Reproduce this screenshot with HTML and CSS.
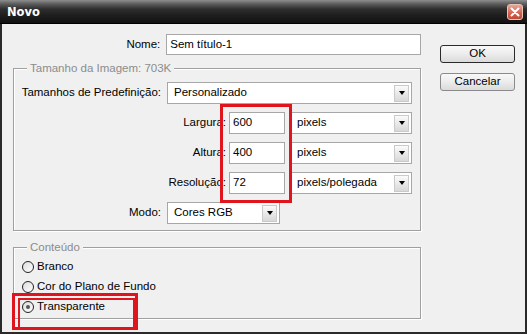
FILE: index.html
```html
<!DOCTYPE html>
<html lang="pt">
  <head>
    <meta charset="utf-8" />
    <title>Novo</title>
    <link rel="stylesheet" href="styles.css">
  </head>
  <body>
    <div class="window">
      <div class="titlebar">
        <span class="title">Novo</span>
        <span class="close">
          <svg width="10" height="10" viewBox="0 0 10 10">
            <path d="M1.5 1.5 L8.5 8.5 M8.5 1.5 L1.5 8.5" stroke="#fff" stroke-width="2" stroke-linecap="round" />
          </svg>
        </span>
      </div>

      <div class="dialog">
        <div class="main">
          <div class="row name-row">
            <span class="lbl">Nome:</span>
            <div class="input name-input">Sem título-1</div>
          </div>

          <div class="group group-size">
            <span class="legend">Tamanho da Imagem: 703K</span>
            <div class="row">
              <span class="lbl">Tamanhos de Predefinição:</span>
              <div class="select preset"><span>Personalizado</span><i class="arrow"></i></div>
            </div>
            <div class="row">
              <span class="lbl wide">Largura:</span>
              <div class="input num">600</div>
              <div class="select unit"><span>pixels</span><i class="arrow"></i></div>
            </div>
            <div class="row">
              <span class="lbl wide">Altura:</span>
              <div class="input num">400</div>
              <div class="select unit"><span>pixels</span><i class="arrow"></i></div>
            </div>
            <div class="row">
              <span class="lbl wide">Resolução:</span>
              <div class="input num">72</div>
              <div class="select unit"><span>pixels/polegada</span><i class="arrow"></i></div>
            </div>
            <div class="row">
              <span class="lbl">Modo:</span>
              <div class="select mode"><span>Cores RGB</span><i class="arrow"></i></div>
            </div>
          </div>

          <div class="group group-content">
            <span class="legend">Conteúdo</span>
            <div class="option"><i class="radio"></i>Branco</div>
            <div class="option"><i class="radio"></i>Cor do Plano de Fundo</div>
            <div class="option"><i class="radio on"></i>Transparente</div>
          </div>
        </div>

        <div class="actions">
          <div class="btn default">OK</div>
          <div class="btn">Cancelar</div>
        </div>
      </div>

      <!-- red annotation boxes drawn over the dialog -->
      <div class="mark mark-size"></div>
      <div class="mark mark-bg"></div>
    </div>
  </body>
</html>
```

FILE: styles.css
```css
* {
  box-sizing: border-box;
}
html,
body {
  margin: 0;
  padding: 0;
}
body {
  width: 527px;
  height: 334px;
  overflow: hidden;
  font: 11.5px/1 "Liberation Sans", Arial, sans-serif;
  color: #000;
}
.window {
  position: relative;
  width: 527px;
  height: 334px;
  background: #2a2a2a;
  display: flex;
  flex-direction: column;
  padding: 0 2px 2px;
}
.titlebar {
  height: 24px;
  margin: 0 -2px;
  padding: 0 4px 0 7px;
  display: flex;
  align-items: center;
  justify-content: space-between;
  background: linear-gradient(#8e8e8e 0, #5c5c5c 4px, #2e2e2e 9px, #1d1d1d 16px, #121212 23px, #000 23px);
}
.title {
  font: bold 11.5px "DejaVu Sans", sans-serif;
  color: #fff;
}
.close {
  width: 16px;
  height: 16px;
  border: 1px solid #e6c4bc;
  border-radius: 3px;
  background: linear-gradient(#eaa596, #d2604f 60%, #c04836);
  display: flex;
  align-items: center;
  justify-content: center;
}
.dialog {
  flex: 1;
  display: flex;
  padding: 10px 0 0 11px;
  background: #f0f0f0;
}
.main {
  width: 408px;
}
.row {
  display: flex;
  align-items: center;
  height: 22px;
}
.lbl {
  width: 147px;
  margin-right: 6px;
  text-align: right;
  white-space: nowrap;
}
.lbl.wide {
  width: 212px;
  margin-right: 3px;
}
.name-row {
  height: 21px;
}
.name-row .lbl {
  width: 148px;
}
.input {
  height: 22px;
  padding: 0 3px;
  display: flex;
  align-items: center;
  background: #fff;
  border: 1px solid #a7a7a7;
}
.name-input {
  width: 256px;
  height: 21px;
}
.num {
  width: 56px;
  margin-right: 5px;
}
.select {
  height: 22px;
  padding: 1px;
  display: flex;
  align-items: center;
  background: #fff;
  border: 1px solid #a7a7a7;
}
.select span {
  flex: 1;
  padding-left: 5px;
  white-space: nowrap;
}
.preset {
  width: 245px;
}
.unit {
  width: 122px;
}
.mode {
  width: 113px;
}
.arrow {
  width: 15px;
  height: 17px;
  margin-right: 1px;
  display: flex;
  align-items: center;
  justify-content: center;
  border: 1px solid #cacaca;
  background: linear-gradient(#fbfbfb, #e9e9e9 50%, #d8d8d8);
}
.arrow::after {
  content: "";
  border-left: 3.5px solid transparent;
  border-right: 3.5px solid transparent;
  border-top: 4px solid #000;
}
.group {
  position: relative;
  border: 1px solid #a0a0a0;
  box-shadow: 1px 1px 0 #fff, inset 1px 1px 0 #fff;
}
.legend {
  position: absolute;
  top: -7px;
  left: 13px;
  padding: 0 3px;
  line-height: 13px;
  color: #8c8c8c;
  background: #f0f0f0;
}
.group-size {
  margin-top: 13px;
  padding: 13px 0 6px;
  display: flex;
  flex-direction: column;
  gap: 8px;
}
.group-content {
  margin-top: 16px;
  padding: 9px 0 1px 8px;
}
.option {
  height: 20px;
  display: flex;
  align-items: center;
}
.radio {
  width: 12px;
  height: 12px;
  margin-right: 3px;
  border: 1px solid #222;
  border-radius: 50%;
  background: linear-gradient(135deg, #dcdcdc, #fff);
  display: flex;
  align-items: center;
  justify-content: center;
}
.radio.on::after {
  content: "";
  width: 4px;
  height: 4px;
  border-radius: 50%;
  background: #555;
}
.actions {
  margin: 11px 0 0 19px;
  display: flex;
  flex-direction: column;
  gap: 10px;
}
.btn {
  width: 75px;
  height: 18px;
  display: flex;
  align-items: center;
  justify-content: center;
  border: 1px solid #8a8a8a;
  border-radius: 3px;
  background: linear-gradient(#f8f8f8, #ececec 50%, #dadada);
}
.btn.default {
  border-color: #2a2a2a;
}
.mark {
  position: absolute;
  border: 3px solid #e0141c;
}
.mark-size {
  left: 220px;
  top: 104px;
  width: 72px;
  height: 99px;
}
.mark-bg {
  left: 12px;
  top: 293px;
  width: 126px;
  height: 37px;
  padding: 2px 0 2px 3px;
}
.mark-bg::after {
  content: "";
  display: block;
  height: 100%;
  border: 2px solid #e0141c;
}
```
